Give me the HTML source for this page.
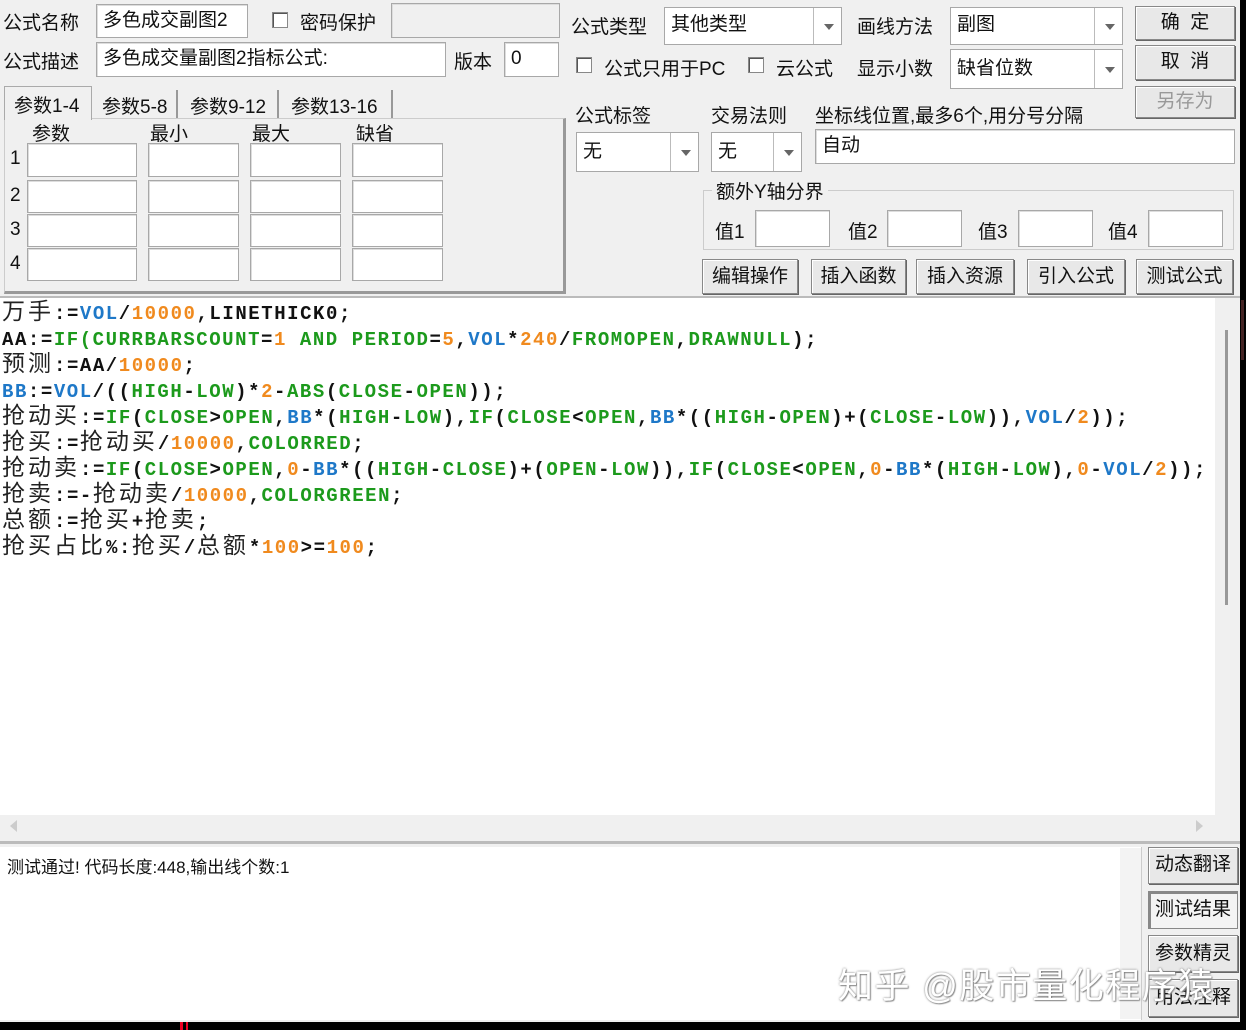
<!DOCTYPE html>
<html><head><meta charset="utf-8"><style>
*{box-sizing:border-box;margin:0;padding:0}
body{width:1246px;height:1030px;background:#000;position:relative;overflow:hidden;font-family:"Liberation Sans","Microsoft YaHei","Noto Sans CJK SC",sans-serif;font-size:19px;color:#111}
.win{position:absolute;left:0;top:0;width:1240px;height:1022px;background:#f0f0f0}
.a{position:absolute;white-space:nowrap}
.in{position:absolute;background:#fff;border:1px solid #a8a8a8;box-shadow:inset 1px 1px 0 #ddd;padding:2px 6px;white-space:nowrap;line-height:28px}
.cb{position:absolute;width:16px;height:16px;background:#fff;border:1px solid #888;box-shadow:inset 1px 1px 0 #555}
.combo{position:absolute;background:#fff;border:1px solid #a8a8a8;padding:0 6px;line-height:34px}
.combo .ar{position:absolute;right:0;top:0;bottom:0;width:28px;border-left:1px solid #bbb}
.combo .ar:after{content:"";position:absolute;left:10px;top:50%;margin-top:-2px;border:5px solid transparent;border-top:6px solid #666;border-bottom:0}
.btn{position:absolute;background:#e8e8e8;border:1px solid #888;box-shadow:inset 1px 1px 0 #fff,1px 1px 0 #666;text-align:center;font-size:19px}
.code{position:absolute;left:0;top:298px;width:1215px;height:517px;background:#fff;font-family:"Liberation Mono",monospace;font-weight:bold;font-size:19px;letter-spacing:1.55px;padding-left:2px;padding-top:3px}
.code div{height:26px;line-height:26px;white-space:nowrap}
.c{font-family:"Noto Sans CJK SC",sans-serif;font-weight:normal;font-size:23px;letter-spacing:3px;color:#222;line-height:0}
.g{color:#1c9a1c}.b{color:#1e78c8}.o{color:#f08a1e}
</style></head><body>
<div class="win">
<div class="a" style="left:3px;top:8px">公式名称</div>
<div class="in" style="left:96px;top:4px;width:152px;height:34px">多色成交副图2</div>
<div class="cb" style="left:272px;top:12px"></div>
<div class="a" style="left:300px;top:8px">密码保护</div>
<div class="in" style="left:391px;top:3px;width:169px;height:35px;background:#f0f0f0"></div>
<div class="a" style="left:3px;top:47px">公式描述</div>
<div class="in" style="left:96px;top:42px;width:350px;height:35px">多色成交量副图2指标公式:</div>
<div class="a" style="left:454px;top:47px">版本</div>
<div class="in" style="left:504px;top:42px;width:55px;height:35px">0</div>
<div class="a" style="left:4px;top:86px;width:88px;height:34px;background:#f0f0f0;border:1px solid #aaa;border-bottom:none;z-index:2;padding:4px 0 0 9px">参数1-4</div>
<div class="a" style="left:94px;top:90px;width:84px;height:28px;border-right:2px solid #999;padding:2px 0 0 8px">参数5-8</div>
<div class="a" style="left:182px;top:90px;width:97px;height:28px;border-right:2px solid #999;padding:2px 0 0 8px">参数9-12</div>
<div class="a" style="left:283px;top:90px;width:110px;height:28px;border-right:2px solid #999;padding:2px 0 0 8px">参数13-16</div>
<div class="a" style="left:4px;top:118px;width:562px;height:176px;border:1px solid #ccc;border-right:3px solid #999;border-bottom:3px solid #999"></div>
<div class="a" style="left:32px;top:119px">参数</div>
<div class="a" style="left:150px;top:119px">最小</div>
<div class="a" style="left:252px;top:119px">最大</div>
<div class="a" style="left:356px;top:119px">缺省</div>
<div class="a" style="left:10px;top:148px">1</div><div class="a" style="left:10px;top:185px">2</div><div class="a" style="left:10px;top:219px">3</div><div class="a" style="left:10px;top:253px">4</div>
<div class="in" style="left:27px;top:143px;width:110px;height:34px"></div><div class="in" style="left:148px;top:143px;width:91px;height:34px"></div><div class="in" style="left:250px;top:143px;width:91px;height:34px"></div><div class="in" style="left:352px;top:143px;width:91px;height:34px"></div>
<div class="in" style="left:27px;top:180px;width:110px;height:33px"></div><div class="in" style="left:148px;top:180px;width:91px;height:33px"></div><div class="in" style="left:250px;top:180px;width:91px;height:33px"></div><div class="in" style="left:352px;top:180px;width:91px;height:33px"></div>
<div class="in" style="left:27px;top:214px;width:110px;height:33px"></div><div class="in" style="left:148px;top:214px;width:91px;height:33px"></div><div class="in" style="left:250px;top:214px;width:91px;height:33px"></div><div class="in" style="left:352px;top:214px;width:91px;height:33px"></div>
<div class="in" style="left:27px;top:248px;width:110px;height:33px"></div><div class="in" style="left:148px;top:248px;width:91px;height:33px"></div><div class="in" style="left:250px;top:248px;width:91px;height:33px"></div><div class="in" style="left:352px;top:248px;width:91px;height:33px"></div>
<div class="a" style="left:571px;top:12px">公式类型</div>
<div class="combo" style="left:664px;top:7px;width:178px;height:38px">其他类型<span class="ar"></span></div>
<div class="a" style="left:857px;top:12px">画线方法</div>
<div class="combo" style="left:950px;top:7px;width:173px;height:38px">副图<span class="ar"></span></div>
<div class="btn" style="left:1135px;top:6px;width:100px;height:34px;line-height:32px">确&nbsp;&nbsp;定</div>
<div class="btn" style="left:1135px;top:45px;width:100px;height:35px;line-height:32px">取&nbsp;&nbsp;消</div>
<div class="btn" style="left:1135px;top:86px;width:100px;height:32px;line-height:30px;color:#999">另存为</div>
<div class="cb" style="left:576px;top:57px"></div>
<div class="a" style="left:604px;top:54px">公式只用于PC</div>
<div class="cb" style="left:748px;top:57px"></div>
<div class="a" style="left:776px;top:54px">云公式</div>
<div class="a" style="left:857px;top:54px">显示小数</div>
<div class="combo" style="left:950px;top:49px;width:173px;height:40px;line-height:38px">缺省位数<span class="ar"></span></div>
<div class="a" style="left:575px;top:101px">公式标签</div>
<div class="a" style="left:711px;top:101px">交易法则</div>
<div class="a" style="left:815px;top:101px">坐标线位置,最多6个,用分号分隔</div>
<div class="combo" style="left:576px;top:132px;width:123px;height:40px;line-height:38px">无<span class="ar"></span></div>
<div class="combo" style="left:711px;top:132px;width:91px;height:40px;line-height:38px">无<span class="ar"></span></div>
<div class="in" style="left:815px;top:129px;width:420px;height:35px">自动</div>
<div class="a" style="left:703px;top:190px;width:531px;height:60px;border:1px solid #ccc"></div>
<div class="a" style="left:712px;top:177px;background:#f0f0f0;padding:0 4px">额外Y轴分界</div>
<div class="a" style="left:715px;top:217px">值1</div><div class="in" style="left:755px;top:210px;width:75px;height:37px"></div>
<div class="a" style="left:848px;top:217px">值2</div><div class="in" style="left:887px;top:210px;width:75px;height:37px"></div>
<div class="a" style="left:978px;top:217px">值3</div><div class="in" style="left:1018px;top:210px;width:75px;height:37px"></div>
<div class="a" style="left:1108px;top:217px">值4</div><div class="in" style="left:1148px;top:210px;width:75px;height:37px"></div>
<div class="btn" style="left:702px;top:259px;width:96px;height:35px;line-height:33px">编辑操作</div>
<div class="btn" style="left:811px;top:259px;width:95px;height:35px;line-height:33px">插入函数</div>
<div class="btn" style="left:916px;top:259px;width:98px;height:35px;line-height:33px">插入资源</div>
<div class="btn" style="left:1027px;top:259px;width:98px;height:35px;line-height:33px">引入公式</div>
<div class="btn" style="left:1136px;top:259px;width:97px;height:35px;line-height:33px">测试公式</div>
<div class="a" style="left:0;top:296px;width:1240px;height:2px;background:#bbb"></div>
<div class="code">
<div><span class="c">万手</span>:=<span class="b">VOL</span>/<span class="o">10000</span>,LINETHICK0;</div>
<div>AA:=<span class="g">IF(CURRBARSCOUNT</span>=<span class="o">1</span> <span class="g">AND PERIOD</span>=<span class="o">5</span>,<span class="b">VOL</span>*<span class="o">240</span>/<span class="g">FROMOPEN</span>,<span class="g">DRAWNULL</span>);</div>
<div><span class="c">预测</span>:=AA/<span class="o">10000</span>;</div>
<div><span class="b">BB</span>:=<span class="b">VOL</span>/((<span class="g">HIGH</span>-<span class="g">LOW</span>)*<span class="o">2</span>-<span class="g">ABS</span>(<span class="g">CLOSE</span>-<span class="g">OPEN</span>));</div>
<div><span class="c">抢动买</span>:=<span class="g">IF</span>(<span class="g">CLOSE</span>&gt;<span class="g">OPEN</span>,<span class="b">BB</span>*(<span class="g">HIGH</span>-<span class="g">LOW</span>),<span class="g">IF</span>(<span class="g">CLOSE</span>&lt;<span class="g">OPEN</span>,<span class="b">BB</span>*((<span class="g">HIGH</span>-<span class="g">OPEN</span>)+(<span class="g">CLOSE</span>-<span class="g">LOW</span>)),<span class="b">VOL</span>/<span class="o">2</span>));</div>
<div><span class="c">抢买</span>:=<span class="c">抢动买</span>/<span class="o">10000</span>,<span class="g">COLORRED</span>;</div>
<div><span class="c">抢动卖</span>:=<span class="g">IF</span>(<span class="g">CLOSE</span>&gt;<span class="g">OPEN</span>,<span class="o">0</span>-<span class="b">BB</span>*((<span class="g">HIGH</span>-<span class="g">CLOSE</span>)+(<span class="g">OPEN</span>-<span class="g">LOW</span>)),<span class="g">IF</span>(<span class="g">CLOSE</span>&lt;<span class="g">OPEN</span>,<span class="o">0</span>-<span class="b">BB</span>*(<span class="g">HIGH</span>-<span class="g">LOW</span>),<span class="o">0</span>-<span class="b">VOL</span>/<span class="o">2</span>));</div>
<div><span class="c">抢卖</span>:=-<span class="c">抢动卖</span>/<span class="o">10000</span>,<span class="g">COLORGREEN</span>;</div>
<div><span class="c">总额</span>:=<span class="c">抢买</span>+<span class="c">抢卖</span>;</div>
<div><span class="c">抢买占比</span>%:<span class="c">抢买</span>/<span class="c">总额</span>*<span class="o">100</span>&gt;=<span class="o">100</span>;</div>
</div>
<div class="a" style="left:1215px;top:298px;width:25px;height:517px;background:#f0f0f0"></div>
<div class="a" style="left:1225px;top:330px;width:3px;height:275px;background:#999"></div>
<div class="a" style="left:0;top:815px;width:1240px;height:26px;background:#f0f0f0"></div>
<div class="a" style="left:10px;top:820px;border:6px solid transparent;border-right:7px solid #ccc;border-left:0"></div>
<div class="a" style="left:1196px;top:820px;border:6px solid transparent;border-left:7px solid #ccc;border-right:0"></div>
<div class="a" style="left:0;top:841px;width:1240px;height:3px;background:#bbb"></div>
<div class="a" style="left:0;top:847px;width:1142px;height:173px;background:#fff;border-right:1px solid #ccc"></div>
<div class="a" style="left:1120px;top:848px;width:21px;height:171px;background:#f3f3f3"></div>
<div class="a" style="left:7px;top:853px;font-size:17px">测试通过! 代码长度:448,输出线个数:1</div>
<div class="btn" style="left:1148px;top:847px;width:90px;height:37px;line-height:34px">动态翻译</div>
<div class="btn" style="left:1148px;top:891px;width:90px;height:38px;line-height:36px;box-shadow:inset 2px 2px 0 #888;background:#f4f4f4">测试结果</div>
<div class="btn" style="left:1148px;top:935px;width:90px;height:37px;line-height:36px">参数精灵</div>
<div class="btn" style="left:1148px;top:979px;width:90px;height:38px;line-height:36px">用法注释</div>
<div class="a" style="left:838px;top:958px;font-size:35px;letter-spacing:1.5px;color:#fff;text-shadow:0 0 2px #777,1px 1px 1px #999">知乎 @股市量化程序猿</div>
</div>
<div class="a" style="left:180px;top:1022px;width:3px;height:8px;background:#e02"></div>
<div class="a" style="left:186px;top:1022px;width:2px;height:8px;background:#e02"></div>
<div class="a" style="left:1241px;top:300px;width:3px;height:60px;background:#422"></div>
</body></html>
